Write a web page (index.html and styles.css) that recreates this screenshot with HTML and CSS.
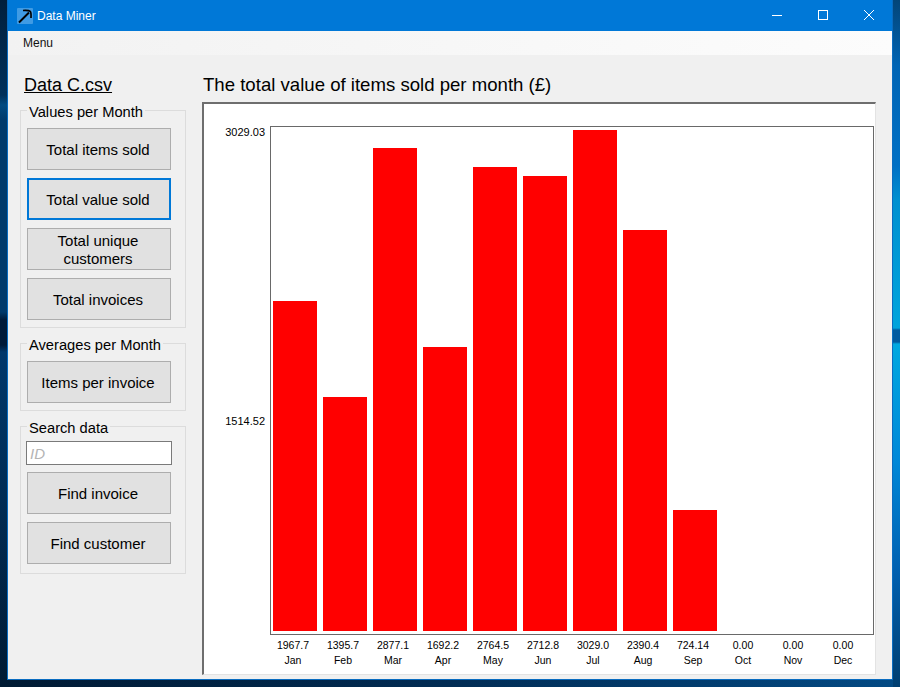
FILE: index.html
```html
<!DOCTYPE html>
<html lang="en">
<head>
  <meta charset="UTF-8">
  <meta name="viewport" content="width=device-width, initial-scale=1.0">
  <title>Data Miner</title>
  <link rel="stylesheet" href="styles.css">
</head>
<body>
  <div class="window">
    <div class="titlebar">
      <svg class="app-icon" width="16" height="16" viewBox="0 0 16 16">
        <rect width="16" height="16" rx="1" fill="#3f9be4"/>
        <path d="M2 14.5 L12 4.5" stroke="#000" stroke-width="2" fill="none"/>
        <path d="M6 2.5 Q12 2.2 13.2 3.3 Q14.3 4.5 14 10" stroke="#000" stroke-width="1.7" fill="none"/>
      </svg>
      <span class="app-name">Data Miner</span>
      <div class="win-controls">
        <svg class="win-btn" width="46" height="31" viewBox="0 0 46 31"><path d="M18 15.5 H28" stroke="#fff" fill="none"/></svg>
        <svg class="win-btn" width="46" height="31" viewBox="0 0 46 31"><rect x="18.5" y="10.5" width="9" height="9" stroke="#fff" fill="none"/></svg>
        <svg class="win-btn" width="46" height="31" viewBox="0 0 46 31"><path d="M18 10 L28 20 M28 10 L18 20" stroke="#fff" fill="none"/></svg>
      </div>
    </div>
    <div class="menubar"><span>Menu</span></div>

    <div class="content">
      <div class="sidebar">
        <h2 class="file-name">Data C.csv</h2>

        <fieldset class="group group-values">
          <legend>Values per Month</legend>
          <button>Total items sold</button>
          <button class="active">Total value sold</button>
          <button class="two-line">Total unique customers</button>
          <button>Total invoices</button>
        </fieldset>

        <fieldset class="group">
          <legend>Averages per Month</legend>
          <button>Items per invoice</button>
        </fieldset>

        <fieldset class="group group-search">
          <legend>Search data</legend>
          <input type="text" placeholder="ID">
          <button>Find invoice</button>
          <button>Find customer</button>
        </fieldset>
      </div>

      <div class="main">
        <h1>The total value of items sold per month (£)</h1>
        <div class="chart-panel">
          <div class="chart-top">
            <div class="y-axis">
              <span>3029.03</span>
              <span>1514.52</span>
            </div>
            <div class="plot">
              <div class="bar" style="height: 330px"></div>
              <div class="bar" style="height: 234px"></div>
              <div class="bar" style="height: 483px"></div>
              <div class="bar" style="height: 284px"></div>
              <div class="bar" style="height: 464px"></div>
              <div class="bar" style="height: 455px"></div>
              <div class="bar" style="height: 501px"></div>
              <div class="bar" style="height: 401px"></div>
              <div class="bar" style="height: 121px"></div>
              <div class="bar" style="height: 0"></div>
              <div class="bar" style="height: 0"></div>
              <div class="bar" style="height: 0"></div>
            </div>
          </div>
          <div class="labels">
            <div class="label"><span>1967.7</span><span>Jan</span></div>
            <div class="label"><span>1395.7</span><span>Feb</span></div>
            <div class="label"><span>2877.1</span><span>Mar</span></div>
            <div class="label"><span>1692.2</span><span>Apr</span></div>
            <div class="label"><span>2764.5</span><span>May</span></div>
            <div class="label"><span>2712.8</span><span>Jun</span></div>
            <div class="label"><span>3029.0</span><span>Jul</span></div>
            <div class="label"><span>2390.4</span><span>Aug</span></div>
            <div class="label"><span>724.14</span><span>Sep</span></div>
            <div class="label"><span>0.00</span><span>Oct</span></div>
            <div class="label"><span>0.00</span><span>Nov</span></div>
            <div class="label"><span>0.00</span><span>Dec</span></div>
          </div>
        </div>
      </div>
    </div>
  </div>
</body>
</html>
```

FILE: styles.css
```css
html, body {
  margin: 0;
  height: 100%;
}

/* desktop wallpaper only shows as thin strips round the window */
body {
  box-sizing: border-box;
  height: 687px;
  padding: 0 7px 7px 7px;
  overflow: hidden;
  font-family: "Liberation Sans", Arial, sans-serif;
  background-color: #012c54;
  background-image:
    linear-gradient(180deg, #011f3c 0, #01305a 95px, #024a80 105px, #013a6b 120px, #013a6b 312px, #011a38 320px, #011a38 345px, #01376a 352px, #012c54 500px, #001a33 687px),
    linear-gradient(180deg, #034578 0, #0064b4 66px, #0070c4 166px, #0090d0 200px, #00a4dc 328px, #005aa0 330px, #005aa0 342px, #00a8e0 344px, #0088d8 460px, #0060b0 570px, #003e70 687px),
    linear-gradient(90deg, #001a33 0, #012c54 450px, #034a84 900px);
  background-size: 7px 100%, 7px 100%, 100% 7px;
  background-position: left top, right top, left bottom;
  background-repeat: no-repeat;
}

.window {
  box-sizing: border-box;
  display: flex;
  flex-direction: column;
  width: 886px;
  height: 680px;
  background-color: #f0f0f0;
  border: 1px solid #0a6cc0;
  border-top: none;
}

/* title bar */
.titlebar {
  display: flex;
  align-items: center;
  height: 31px;
  padding-left: 9px;
  background-color: #0078d7;
  color: #fff;
}

.app-name {
  margin-left: 4px;
  font-size: 12px;
}

.win-controls {
  display: flex;
  margin-left: auto;
}

.win-btn {
  display: block;
}

.menubar {
  height: 24px;
  padding-left: 15px;
  line-height: 24px;
  font-size: 12px;
  color: #111;
  background: linear-gradient(90deg, #f2f2f2, #fcfcfc);
}

/* main area */
.content {
  display: flex;
  flex: 1;
  min-height: 0;
}

.sidebar {
  width: 166px;
  margin-left: 12px;
  margin-right: 16px;
}

.file-name {
  margin: 19px 0 0 4px;
  height: 23px;
  font-size: 18px;
  line-height: 23px;
  font-weight: normal;
  text-decoration: underline;
  color: #000;
}

.group {
  box-sizing: border-box;
  display: flex;
  flex-direction: column;
  gap: 8px;
  margin: 4px 0 0 0;
  min-width: 0;
  padding: 7px 14px 7px 6px;
  border: 1px solid #dcdcdc;
}

.group-values {
  margin-top: 2px;
}

.group-search {
  padding-bottom: 9px;
}

.group legend {
  margin-left: 0;
  padding: 4px 2px 0 2px;
  font-size: 14.7px;
  line-height: 18px;
  color: #000;
}

.group button {
  box-sizing: border-box;
  width: 144px;
  height: 42px;
  padding: 2px 10px 0 8px;
  background-color: #e1e1e1;
  border: 1px solid #adadad;
  font-family: "Liberation Sans", Arial, sans-serif;
  font-size: 15px;
  line-height: 18px;
  color: #000;
}

.group button.active {
  border: 2px solid #0078d7;
}

.group input {
  box-sizing: border-box;
  width: 146px;
  height: 24px;
  margin: -3px 0 -1px -1px;
  padding: 0 3px;
  background-color: #fff;
  border: 1px solid #7a7a7a;
  font-family: "Liberation Sans", Arial, sans-serif;
  font-size: 15px;
  font-style: italic;
}

.group input::placeholder {
  color: #b4b4b4;
}

.main {
  width: 674px;
}

.main h1 {
  margin: 18px 0 0 1px;
  height: 29px;
  font-size: 18.6px;
  line-height: 24px;
  font-weight: normal;
  color: #000;
}

/* chart */
.chart-panel {
  box-sizing: border-box;
  height: 573px;
  background-color: #fff;
  border-top: 2px solid #6e6e6e;
  border-left: 2px solid #6e6e6e;
  border-right: 1px solid #e3e3e3;
  border-bottom: 1px solid #e3e3e3;
}

.chart-top {
  display: flex;
  margin-top: 22px;
}

.y-axis {
  display: flex;
  flex-direction: column;
  gap: 275px;
  box-sizing: border-box;
  width: 66px;
  margin-top: -1px;
  padding-right: 5px;
  text-align: right;
  font-size: 11px;
  line-height: 14px;
  color: #000;
}

.plot {
  box-sizing: border-box;
  display: flex;
  align-items: flex-end;
  gap: 6px;
  width: 604px;
  height: 509px;
  padding: 0 0 3px 2px;
  border: 1px solid #696969;
}

.bar {
  width: 44px;
  flex: none;
  background-color: #f00;
}

.labels {
  display: flex;
  margin-left: 64px;
  padding-top: 3px;
}

.label {
  display: flex;
  flex-direction: column;
  width: 50px;
  flex: none;
  text-align: center;
  font-size: 10.5px;
  line-height: 15px;
  color: #000;
}
```
